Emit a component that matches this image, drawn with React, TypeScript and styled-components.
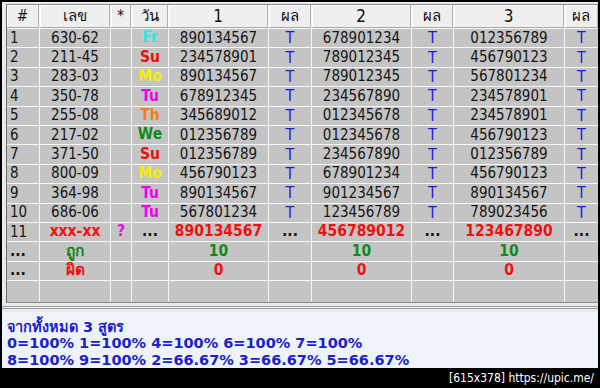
import { Fragment } from "react";
import styled, { createGlobalStyle } from "styled-components";

const GlobalStyle = createGlobalStyle`
  html, body {
    margin: 0;
    padding: 0;
    background: #000;
  }
  body {
    width: 600px;
    height: 388px;
    overflow: hidden;
    font-family: "DejaVu Sans Condensed", "DejaVu Sans", "Noto Sans", sans-serif;
  }
`;

interface Row {
  no: string;
  num: string;
  day: string;
  sets: string[];
  results: string[];
}

const DAY_COLORS: Record<string, string> = {
  Fr: "#33e6e6",
  Su: "#e81010",
  Mo: "#f2f000",
  Tu: "#f000f0",
  Th: "#f08020",
  We: "#108a18",
};

const rows: Row[] = [
  { no: "1", num: "630-62", day: "Fr", sets: ["890134567", "678901234", "012356789"], results: ["T", "T", "T"] },
  { no: "2", num: "211-45", day: "Su", sets: ["234578901", "789012345", "456790123"], results: ["T", "T", "T"] },
  { no: "3", num: "283-03", day: "Mo", sets: ["890134567", "789012345", "567801234"], results: ["T", "T", "T"] },
  { no: "4", num: "350-78", day: "Tu", sets: ["678912345", "234567890", "234578901"], results: ["T", "T", "T"] },
  { no: "5", num: "255-08", day: "Th", sets: ["345689012", "012345678", "234578901"], results: ["T", "T", "T"] },
  { no: "6", num: "217-02", day: "We", sets: ["012356789", "012345678", "456790123"], results: ["T", "T", "T"] },
  { no: "7", num: "371-50", day: "Su", sets: ["012356789", "234567890", "012356789"], results: ["T", "T", "T"] },
  { no: "8", num: "800-09", day: "Mo", sets: ["456790123", "678901234", "456790123"], results: ["T", "T", "T"] },
  { no: "9", num: "364-98", day: "Tu", sets: ["890134567", "901234567", "890134567"], results: ["T", "T", "T"] },
  { no: "10", num: "686-06", day: "Tu", sets: ["567801234", "123456789", "789023456"], results: ["T", "T", "T"] },
];

const headers = ["#", "เลข", "*", "วัน", "1", "ผล", "2", "ผล", "3", "ผล"];

const RED = "#f01010";
const GREEN = "#108a18";

export default function App() {
  return (
    <>
      <GlobalStyle />
      <Window>
        <GridFrame>
          <Table>
            {headers.map((h, i) => (
              <HeadCell key={"h" + i} $big={/\d/.test(h)}>
                {h}
              </HeadCell>
            ))}

            {rows.map((r) => (
              <RowCells key={r.no} row={r} />
            ))}

            {/* pending row */}
            <Cell $align="left">11</Cell>
            <Cell $color={RED} $bold>xxx-xx</Cell>
            <Cell $color="#e010e0" $bold>?</Cell>
            <Cell $bold>...</Cell>
            <Cell $color={RED} $bold>890134567</Cell>
            <Cell $bold>...</Cell>
            <Cell $color={RED} $bold>456789012</Cell>
            <Cell $bold>...</Cell>
            <Cell $color={RED} $bold>123467890</Cell>
            <Cell $bold>...</Cell>

            {/* totals */}
            <Cell $align="left" $bold>...</Cell>
            <Cell $color={GREEN} $bold>ถูก</Cell>
            <Cell />
            <Cell />
            <Cell $color={GREEN} $bold>10</Cell>
            <Cell />
            <Cell $color={GREEN} $bold>10</Cell>
            <Cell />
            <Cell $color={GREEN} $bold>10</Cell>
            <Cell />

            <Cell $align="left" $bold>...</Cell>
            <Cell $color={RED} $bold>ผิด</Cell>
            <Cell />
            <Cell />
            <Cell $color={RED} $bold>0</Cell>
            <Cell />
            <Cell $color={RED} $bold>0</Cell>
            <Cell />
            <Cell $color={RED} $bold>0</Cell>
            <Cell />

            {headers.map((_, i) => (
              <Cell key={"e" + i} />
            ))}
          </Table>
        </GridFrame>
        <Divider />
        <Summary>
          <SummaryLine>จากทั้งหมด 3 สูตร</SummaryLine>
          <SummaryLine>0=100% 1=100% 4=100% 6=100% 7=100%</SummaryLine>
          <SummaryLine>8=100% 9=100% 2=66.67% 3=66.67% 5=66.67%</SummaryLine>
        </Summary>
      </Window>
      <Caption>[615x378] https://upic.me/</Caption>
    </>
  );
}

const RowCells: React.FC<{ row: Row }> = ({ row }) => (
  <>
    <Cell $align="left">{row.no}</Cell>
    <Cell>{row.num}</Cell>
    <Cell />
    <Cell $color={DAY_COLORS[row.day]} $bold>
      {row.day}
    </Cell>
    {row.sets.map((s, i) => (
      <Fragment key={i}>
        <Cell>{s}</Cell>
        <Cell $color="#1c1ce0" $result>
          {row.results[i]}
        </Cell>
      </Fragment>
    ))}
  </>
);

const Window = styled.div`
  margin: 2px 2px 0 2px;
  width: 596px;
  height: 366px;
  background: #e9e9e9;
  display: flex;
  flex-direction: column;
  padding: 2px 0 0 4px;
  box-sizing: border-box;
`;

const GridFrame = styled.div`
  border-left: 1px solid #6a6a6a;
  border-top: 1px solid #8a8a8a;
  border-bottom: 1px solid #8a8a8a;
  background: #fff;
`;

const Table = styled.div`
  display: grid;
  grid-template-columns: 32px 70px 20px 36px 99px 42px 99px 41px 110px 1fr;
  grid-template-rows: 23px repeat(13, 18.4px) 21px;
  gap: 1px;
  background: #f6f6f6;
`;

const HeadCell = styled.div<{ $big?: boolean }>`
  display: flex;
  align-items: center;
  justify-content: center;
  background: #efefef;
  border-right: 1px solid #b0b0b0;
  border-bottom: 1px solid #a8a8a8;
  box-shadow: inset 1px 1px 0 #fff;
  color: #111;
  font-size: ${(p) => (p.$big ? "17px" : "15px")};
  line-height: 1;
`;

const Cell = styled.div<{
  $align?: "left" | "center";
  $color?: string;
  $bold?: boolean;
  $result?: boolean;
}>`
  display: flex;
  align-items: center;
  justify-content: ${(p) => (p.$align === "left" ? "flex-start" : "center")};
  padding-left: ${(p) => (p.$align === "left" ? "3px" : "0")};
  background: #c4c4c4;
  color: ${(p) => p.$color ?? "#151515"};
  font-weight: ${(p) => (p.$bold ? 700 : 400)};
  font-size: ${(p) => (p.$bold ? "15.5px" : p.$result ? "16px" : "15px")};
  line-height: 1;
  white-space: nowrap;
  overflow: hidden;
`;

const Divider = styled.div`
  height: 4px;
  margin-top: 3px;
  border-top: 1px solid #9c9c9c;
  border-bottom: 1px solid #9c9c9c;
  background: #f2f2f2;
  margin-left: -4px;
`;

const Summary = styled.div`
  flex: 1;
  margin-left: -4px;
  margin-top: 3px;
  background: #eef3fa;
  padding: 7px 0 0 5px;
  color: #1c22c8;
  font-family: "DejaVu Sans", "Noto Sans", sans-serif;
  font-weight: 700;
  font-size: 14.5px;
`;

const SummaryLine = styled.div`
  line-height: 16.5px;
  white-space: nowrap;
`;

const Caption = styled.div`
  height: 20px;
  display: flex;
  align-items: center;
  justify-content: flex-end;
  padding-right: 6px;
  color: #fff;
  font-family: "DejaVu Sans Condensed", "DejaVu Sans", sans-serif;
  font-size: 12px;
`;
